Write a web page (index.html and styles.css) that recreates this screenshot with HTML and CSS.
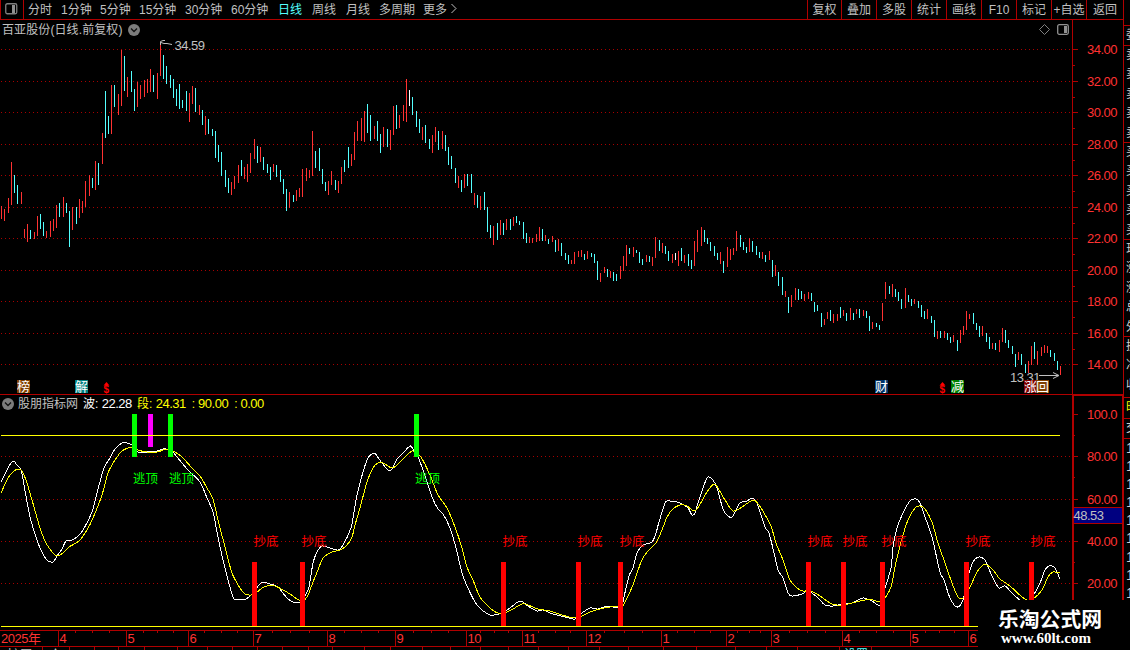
FILE: index.html
```html
<!DOCTYPE html>
<html lang="zh-CN">
<head>
  <meta charset="UTF-8" />
  <title>百亚股份 日线</title>
  <link rel="stylesheet" href="styles.css">
</head>
<body>
  <div class="toolbar">
    <div class="panel-toggle">
      <svg width="13" height="12" viewBox="0 0 13 12"><rect x=".75" y=".75" width="11" height="10" rx="1.5" fill="none" stroke="#808080" stroke-width="1.3"/><rect x="7" y="2" width="3" height="8" fill="#909090"/></svg>
    </div>
    <div class="periods">
      <span>分时</span><span>1分钟</span><span>5分钟</span><span>15分钟</span><span>30分钟</span><span>60分钟</span><span class="active">日线</span><span>周线</span><span>月线</span><span>多周期</span><span class="more">更多<svg width="6" height="11" viewBox="0 0 6 11"><path d="M.5 1L5 5.500L.5 10" fill="none" stroke="#c0c0c0"/></svg></span>
    </div>
    <div class="tools">
      <span>复权</span><span>叠加</span><span>多股</span><span>统计</span><span>画线</span><span>F10</span><span>标记</span><span>+自选</span><span>返回</span>
    </div>
  </div>

  <div class="main">
    <div class="charts">
      <div class="price-panel">
        <svg id="price" width="1123" height="374" viewBox="0 20 1123 374"></svg>
        <div class="title">百亚股份(日线.前复权)
          <svg class="round" width="12" height="12" viewBox="0 0 12 12"><circle cx="6" cy="6" r="6" fill="#7c7c7c"/><path d="M3 4.500L6 7.500L9 4.500" fill="none" stroke="#111" stroke-width="1.300"/></svg>
        </div>
        <div class="corner">
          <svg width="11" height="11" viewBox="0 0 11 11"><path d="M5.500 .5L10.500 5.500L5.500 10.500L.5 5.500Z" fill="none" stroke="#808080"/></svg>
          <svg width="12" height="11" viewBox="0 0 12 11"><rect x=".7" y=".7" width="10.600" height="9.600" rx="1.500" fill="none" stroke="#909090" stroke-width="1.300"/><rect x="7" y="2" width="3" height="7" fill="#909090"/></svg>
        </div>
      </div>
      <div class="indicator-panel">
        <svg id="indicator" width="1123" height="256" viewBox="0 394 1123 256"></svg>
        <div class="legend">
          <svg class="round" width="12" height="12" viewBox="0 0 12 12"><circle cx="6" cy="6" r="6" fill="#7c7c7c"/><path d="M3 4.500L6 7.500L9 4.500" fill="none" stroke="#111" stroke-width="1.300"/></svg>
          <span class="name">股朋指标网</span>
          <span class="wave">波: <b>22.28</b></span>
          <span class="seg">段: <b>24.31</b></span>
          <span class="seg level-value">:<b>90.00</b></span>
          <span class="seg level-value">:<b>0.00</b></span>
        </div>
      </div>
    </div>
    <div class="quotes">
      <div class="q q1">委</div>
      <div class="q q5">卖<br>卖<br>卖<br>卖<br>卖</div>
      <div class="q q5">买<br>买<br>买<br>买<br>买</div>
      <div class="q q5">现<br>涨<br>涨<br>总<br>外</div>
      <div class="q q3">换<br>净<br>收</div>
      <div class="q tab">时</div>
      <div class="q q1">交</div>
      <div class="q ticks">1<br>1<br>1<br>1<br>1<br>1<br>1<br>1<br>1</div>
    </div>
  </div>

  <div class="watermark">
    <div class="site">乐淘公式网</div>
    <div class="url">www.60lt.com</div>
  </div>

  <script>
    // x, colour, high-low; r = up, c = down, w = flat
    const bars = `1r206-219 4r209-221 8r198-213 11r162-205 14c175-193 17c185-204 21r192-204 24r229-238 27r224-242 30c230-239
34r232-239 37r216-236 40c214-229 43c222-236 46r231-238 50r221-237 53r219-231 56r205-228 59c203-217 63r197-217
66c203-213 69c211-247 72r207-230 76c207-224 79r199-218 82r201-213 85r181-207 89r175-196 92c178-188 95r161-190
98c163-185 102r133-164 105c91-138 108c116-134 111r85-134 114c85-107 118r94-115 121r50-106 124c56-91 127r77-97
131c71-92 134c89-111 137r82-107 140r85-99 144r80-97 147r79-93 150r69-92 153c75-92 157r73-99 160r43-76
163c55-79 166c66-84 170c75-88 173c79-98 176c89-106 179c84-109 182c100-108 186c91-111 189r93-122 192r86-104
195c88-112 199r105-115 202c110-125 205r116-135 208c119-134 212c129-136 215c131-158 218c145-162 221c152-176 225c170-187
228c178-193 231r182-195 234r176-189 238r165-183 241c160-176 244r167-179 247r164-182 250r153-173 254r139-159 257c146-163
260r147-162 263c157-170 267c164-173 270c167-180 273r164-172 276c165-177 280c170-182 283c179-194 286c189-211 289r192-208
293c195-202 296r190-201 299r188-197 302r169-197 306r168-181 309r170-178 312r131-176 315c151-168 319c148-171 322c169-184
325c182-191 328r181-195 331r171-185 335c180-190 338r181-193 341r167-184 344c160-172 348c147-168 351r154-166 354r132-160
357r121-141 361r118-141 364r111-142 367c104-133 370c115-141 374r126-139 377c121-141 380c134-153 383r127-147 387c129-147
390r130-150 393r106-135 396c105-129 399r115-128 403r105-121 406r79-122 409w90-106 412c97-115 416c111-127 419c119-133
422r127-140 425c125-143 429c139-149 432r135-153 435r127-142 438c131-150 442r131-149 445c135-151 448c147-165 451c156-169
455c168-183 458r176-188 461c180-192 464r174-188 467c174-186 471c174-193 474r193-205 477c195-208 480r196-210 484c192-210
487c207-232 490c225-238 493r226-245 497c223-240 500r220-235 503c223-235 506r219-230 510c219-230 513r217-226 516c216-223
519c221-225 523c222-239 526c233-243 529r237-243 532r238-243 536r234-242 539r227-241 542c229-241 545r235-241 548c239-244
552r236-242 555c240-252 558r239-251 561c243-256 565c253-260 568c255-264 571r260-264 574r252-264 578r251-257 581r250-257
584c254-260 587r251-259 591c253-257 594c254-263 597c261-280 600r273-282 604r267-273 607c269-277 610r271-278 613c272-281
616c274-281 620r266-279 623r256-271 626r245-266 629c248-254 633r247-257 636c250-253 639c252-263 642c259-265 646r255-262
649c256-262 652r257-266 655r237-258 659c240-251 662r243-253 665c246-254 668c251-261 672r254-263 675w253-260 678r251-266
681c248-261 684r255-263 688c254-266 691c260-269 694r241-266 697r230-252 701r227-246 704c230-242 707c238-244 710c242-251
714c246-256 717c253-260 720r252-264 723c261-273 727r247-267 730r249-260 733r248-255 736r231-251 740c235-247 743c242-250
746c247-253 749r238-252 752c241-252 756c246-255 759c252-258 762r252-259 765c255-262 769r251-260 772c260-277 775r265-276
778c272-286 782c277-295 785r291-297 788c297-313 791r295-307 795r288-300 798c289-300 801c291-299 804r294-301 808r292-299
811c293-301 814c302-312 817c305-311 821c313-327 824r319-325 827r312-319 830c310-321 833r314-323 837r314-321 840c307-318
843r310-316 846c313-321 850r308-320 853c313-320 856r309-314 859c309-318 863r310-316 866c311-318 869c316-331 872r322-329
876c323-327 879c325-330 882r303-321 885r282-299 889c286-294 892r284-297 895c289-297 898c292-301 901c299-309 905r288-308
908c295-302 911c299-306 914r299-304 918c301-308 921c305-317 924c311-319 927r309-319 931c316-323 934c320-337 937r331-339
940c331-338 944r331-338 947c333-340 950c337-343 953r335-342 957c340-351 960r330-343 963r326-335 966r311-330 969r314-319
973c313-324 976c323-330 979c326-337 982r326-336 986c333-342 989c337-349 992r343-349 995c343-350 999r340-352 1002r328-342
1005c330-343 1008c340-348 1012c346-354 1015c354-367 1018r352-360 1021c354-365 1025c364-373 1028r361-373 1031r346-365 1034c342-359
1037r351-365 1041r347-356 1044r345-353 1047r346-353 1050c350-357 1054c353-361 1057c361-370 1060r366-375`.split(/\s+/);

    const wave = `1,482 7,470 11,463 14,461 16,464 21,470 24,485 30,517 38,543 46,559 53,562 57,556 62,549 66,541 72,540 77,537 83,530 92,512 97,493 104,468
110,458 115,449 122,443 127,443 132,445 138,452 147,452 157,451 163,449 171,450 177,457 188,470 200,482 207,498 213,512 217,532 223,560 233,597 238,599 246,599
252,594 255,590 259,585 263,582 270,584 278,587 288,599 297,603 303,600 305,596 309,587 313,563 317,552 322,546 330,548 338,550 343,545 351,528 353,518 357,495
363,472 368,458 374,453 377,456 382,463 390,471 397,459 403,453 410,446 413,449 418,457 423,470 432,497 438,509 443,514 450,528 456,548 462,573 467,586 477,605
490,615 502,613 510,608 520,601 528,606 537,611 543,610 553,614 569,618 575,619 582,613 590,608 598,609 608,606 617,608 622,606 624,597 629,576 633,568 637,553
643,545 652,542 656,533 659,522 665,503 668,501 677,502 682,504 688,508 692,515 695,513 698,503 706,480 709,477 713,480 717,488 723,509 728,516 732,517 735,512
740,503 747,501 752,498 757,503 765,527 769,533 775,557 778,570 783,578 788,593 792,596 802,594 808,591 817,597 825,605 833,606 843,604 852,603 863,598 872,601
880,605 885,588 891,568 893,547 897,528 903,513 910,501 916,499 920,503 925,517 932,537 940,572 944,580 950,598 957,607 963,600 968,577 973,562 979,557 985,560
988,567 993,578 999,588 1005,586 1012,593 1020,600 1029,602 1033,596 1040,583 1045,570 1049,566 1054,567 1057,572 1060,579`;
    const segment = `1,493 8,478 14,471 18,469 22,471 27,483 34,507 40,528 46,543 53,553 58,556 63,553 69,547 79,541 87,530 93,518 102,495 108,473 115,460 122,451
128,448 133,447 138,450 147,452 157,452 167,449 173,451 182,457 192,468 200,476 207,488 213,499 218,520 225,547 232,573 240,588 245,594 251,595 256,593 262,588
267,586 275,586 283,590 290,594 297,599 303,601 308,595 313,582 318,570 323,558 332,552 340,550 347,545 352,537 355,525 360,508 367,482 373,468 378,463 383,463
392,468 398,464 407,455 412,451 415,452 421,457 430,475 438,495 447,508 455,527 462,548 467,567 473,580 480,597 490,608 498,613 507,612 513,609 522,604 528,605
538,609 550,611 569,617 579,617 590,612 600,609 610,607 622,606 625,602 633,585 641,562 647,552 656,543 662,530 667,517 673,509 680,505 687,506 694,511 699,506
707,492 714,484 718,488 725,500 733,511 742,507 753,500 759,505 764,513 771,526 776,543 783,560 790,580 797,588 803,591 811,591 820,596 832,604 843,605 860,601
865,600 873,600 880,602 885,598 891,587 895,567 901,542 908,520 915,508 920,506 925,509 932,522 938,543 945,563 952,583 958,597 963,598 970,587 977,572 983,565
987,565 993,570 1000,579 1010,586 1022,597 1027,600 1033,599 1042,590 1048,577 1053,572 1060,573`;

    const rect = (x, y, w, h, cls) => `<rect x="${x}" y="${y}" width="${w}" height="${h}" class="${cls}"/>`;
    const text = (x, y, str, cls) => `<text x="${x}" y="${y}" class="${cls}">${str}</text>`;
    const dots = y => `<path d="M1 ${y + .5}H1072" class="grid"/>`;
    const badge = (x, str, cls) => rect(x, 380, 13, 13, cls) + text(x, 391.3, str, "badge");
    // dividend mark: small arrow above a dollar sign
    const dollar = x => `<path d="M${x + .5} 385.500L${x + 3.5} 382L${x + 6.5} 385.500Z" class="fill-red"/>` + text(x + .5, 393, "$", "dollar");

    // curve through all the points
    function smooth(points) {
      const p = points.split(/\s+/).map(q => q.split(",").map(Number));
      let d = "M" + p[0];
      for (let i = 0; i < p.length - 1; i++) {
        const a = p[i - 1] || p[i], b = p[i], c = p[i + 1], e = p[i + 2] || c;
        d += `C${b[0] + (c[0] - a[0]) / 7} ${b[1] + (c[1] - a[1]) / 7} ${c[0] - (e[0] - b[0]) / 7} ${c[1] - (e[1] - b[1]) / 7} ${c[0]} ${c[1]}`;
      }
      return d;
    }

    // price panel
    let s = "";
    const levels = [49, 81, 112, 144, 175, 207, 238, 270, 301, 333, 364];
    levels.forEach((y, i) => {
      s += dots(y) + rect(1073, y, 5, 1, "line");
      if (i < 10) s += rect(1073, y + 16, 2, 1, "line");
      s += text(1087, y + 5, (34 - i * 2).toFixed(2), "scale");
    });
    for (const b of bars) {
      const m = b.match(/(\d+)(\w)(\d+)-(\d+)/);
      s += rect(m[1], m[3], 1, m[4] - m[3], "bar-" + m[2]);
    }
    s += rect(1072, 20, 1, 374, "line");
    s += `<path d="M160.500 45V41.500L163 40.500H165M161 42.500L164 43.500H167L172 44.500" class="arrow"/>` + text(174.5, 50, "34.59", "mark");
    s += text(1010, 381.5, "13.31", "mark") + `<path d="M1039 375.500H1058M1053 372.500L1059 375.500L1053 378.500" class="arrow"/>`;
    s += badge(17, "榜", "brown") + badge(75, "解", "teal") + dollar(103);
    s += badge(875, "财", "navy") + dollar(939) + badge(951, "减", "green");
    s += badge(1024, "涨", "maroon") + badge(1036, "回", "brown");
    document.getElementById("price").innerHTML = s;

    // indicator panel
    s = "";
    [456, 499, 541, 583].forEach(y => s += dots(y));
    s += `<path d="${smooth(wave)}" class="curve white"/><path d="${smooth(segment)}" class="curve yellow"/>`;
    [132, 168, 414].forEach(x => s += rect(x, 414, 5, 43, "sell"));
    s += rect(148, 414, 5, 33, "magenta");
    [252, 300, 501, 576, 618, 806, 841, 880, 964, 1029].forEach(x => s += rect(x, 562, 5, 64, "buy"));
    s += rect(1, 435, 1059, 1, "level") + rect(1, 626, 1059, 1, "level");
    [133, 169, 415].forEach(x => s += text(x, 482.5, "逃顶", "sell-text"));
    [254, 302, 503, 578, 620, 808, 843, 882, 966, 1031].forEach(x => s += text(x - .5, 546, "抄底", "buy-text"));

    [[414, "100.0"], [456, "80.00"], [499, "60.00"], [541, "40.00"], [583, "20.00"]].forEach(([y, v]) => {
      s += rect(1074, y, 4, 1, "line") + rect(1074, y + 21, 1, 1, "line") + text(1087, y + 5, v, "scale");
    });
    s += rect(0, 394, 1123, 1, "line") + rect(1072, 394, 51, 2, "line") + rect(1072, 394, 2, 206, "line") + rect(1122, 394, 1, 206, "line");
    s += rect(1074, 507, 48, 17, "line") + rect(1074, 508, 48, 15, "value") + text(1073.5, 519.5, "48.53", "mark");

    // time axis
    s += rect(0, 630, 1123, 1, "line") + rect(0, 646, 1123, 1, "line") + text(1, 643, "2025年", "scale");
    [[58, 4], [126, 5], [188, 6], [253, 7], [327, 8], [395, 9], [466, 10], [522, 11], [586, 12], [661, 1], [726, 2], [771, 3], [842, 4], [910, 5], [968, 6]].forEach(([x, m]) => {
      s += rect(x, 630, 1, 16, "line") + text(x + 1.5, 643, m, "scale");
    });
    [75, 92, 109, 143, 157, 173, 204, 221, 237, 272, 290, 309, 344, 361, 378, 413, 431, 448, 480, 494, 508, 538, 555, 570, 604, 624, 642, 677, 694, 710, 737, 749, 760, 789, 807, 825, 859, 876, 893, 925, 939, 954]
      .forEach(x => s += rect(x, 631, 1, 2, "line"));
    [42, 69, 94, 118, 144, 177, 207, 232, 257, 282, 308, 332, 364, 390, 422, 450, 480, 508, 538, 568, 599, 628, 663, 696, 735, 766, 797, 839, 871]
      .forEach(x => s += rect(x, 647, 1, 3, "line"));
    s += text(7, 659, "扩展", "mark") + text(49, 658, "∧", "mark") + text(844, 659, "设置", "cyan");
    document.getElementById("indicator").innerHTML = s;
  </script>
</body>
</html>
```
FILE: styles.css
```css
* { box-sizing: border-box; }
body {
  margin: 0; width: 1130px; height: 650px; overflow: hidden; position: relative;
  background: #000; color: #c0c0c0;
  font: 12px/14px "Liberation Sans", "Noto Sans CJK SC", sans-serif;
}
svg { display: block; }

.toolbar { display: flex; height: 20px; width: 1124px; border-bottom: 1px solid #b00000; border-right: 1px solid #b00000; }
.panel-toggle { width: 24px; padding: 3px 0 0 4px; border: solid #b00000; border-width: 0 1px; }
.periods {
  display: grid; flex: 1; padding-left: 4px; line-height: 20px; white-space: nowrap;
  grid-template-columns: 33px 39px 39px 46px 46px 47px 34px 34px 33px 44px 40px;
}
.periods .active { color: #54ffff; }
.periods .more { display: flex; gap: 4px; }
.periods .more svg { margin-top: 3px; }
.tools { display: grid; grid-template-columns: 34px repeat(7, 35px) 37px; line-height: 20px; text-align: center; white-space: nowrap; }
.tools span { border-left: 1px solid #b00000; height: 19px; }

.main { display: flex; }
.charts { width: 1123px; }
.price-panel, .indicator-panel { position: relative; }
.title { position: absolute; left: 2px; top: 3px; display: flex; align-items: center; gap: 5px; letter-spacing: .1px; white-space: nowrap; }
.title .round { margin-top: -1px; }
.corner { position: absolute; left: 1039px; top: 4px; display: flex; gap: 7px; }
.legend { position: absolute; left: 2px; top: 3px; display: flex; align-items: center; white-space: nowrap; }
.legend .round { margin-top: -1px; }
.legend b { font-weight: normal; font-size: 13px; letter-spacing: -.5px; }
.legend .name { margin: 0 5px 0 4px; }
.legend .wave { color: #fff; width: 54px; }
.legend .seg { color: #ff0; margin-right: 6px; }
.legend .level-value b { margin-left: 3px; }

.quotes { width: 7px; height: 580px; overflow: hidden; border-left: 1px solid #b00000; line-height: 19.4px; color: #d0d0d0; padding-top: 5px; }
.q { border-top: 1px solid #b00000; padding-left: 2px; width: 30px; }
.q1 { height: 20px; }
.q5 { height: 97px; }
.q3 { height: 61px; }
.tab { height: 21px; color: #ff0; }
.ticks { line-height: 18.1px; font-size: 14px; height: 190px; }

.grid { stroke: #a80000; stroke-dasharray: 1 3; shape-rendering: crispEdges; }
.line, .bar-r, .bar-c, .bar-w { shape-rendering: crispEdges; }
.line { fill: #b00000; }
.bar-r { fill: #ff3232; }
.bar-c { fill: #54ffff; }
.bar-w { fill: #fff; }
.scale, .mark { font-size: 13px; letter-spacing: -.5px; }
.scale { fill: #ff3232; }
.mark { fill: #c0c0c0; }
.arrow { fill: none; stroke: #c0c0c0; }
.badge { fill: #fff; font-size: 13px; }
.dollar { fill: #f00; font-size: 10px; font-weight: bold; }
.fill-red { fill: #f00; }
.brown { fill: #804000; }
.teal { fill: #008080; }
.navy { fill: #003468; }
.green { fill: #008000; }
.maroon { fill: #800000; }
.curve { fill: none; stroke-width: 1; shape-rendering: crispEdges; }
.white { stroke: #fff; }
.yellow { stroke: #ff0; }
.level { fill: #ff0; }
.sell, .sell-text { fill: #0f0; }
.buy, .buy-text { fill: #f00; }
.sell-text, .buy-text { font-size: 12.5px; }
.magenta { fill: #f0f; }
.value { fill: #000080; }
.cyan { fill: #54ffff; }

.watermark { position: absolute; left: 978px; top: 600px; width: 152px; height: 50px; padding: 6px 0 0 20px; background: #000; color: #fff; }
.site { font: bold 20.8px/24px "Noto Sans CJK SC", sans-serif; white-space: nowrap; }
.url { font: bold 15px/17px "Liberation Serif", serif; padding-left: 3px; }
```
